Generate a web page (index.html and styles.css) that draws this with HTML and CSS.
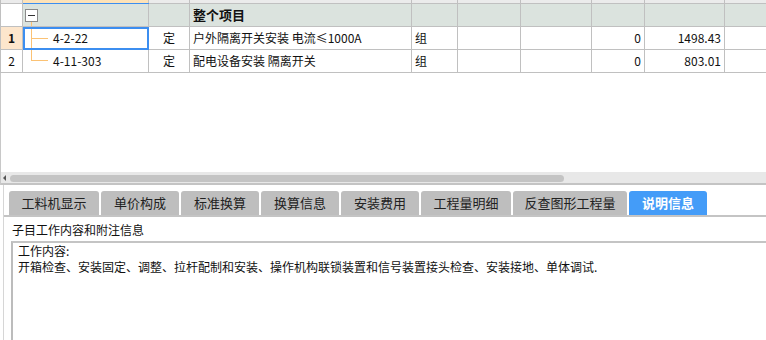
FILE: index.html
```html
<!DOCTYPE html>
<html lang="zh-CN">
<head>
    <meta charset="UTF-8">
    <title>说明信息</title>
    <link rel="stylesheet" href="styles.css">
</head>
<body>
    <div class="grid-panel">
        <table class="grid">
            <colgroup>
                <col style="width:22px"><col style="width:126px"><col style="width:41px">
                <col style="width:222px"><col style="width:46px"><col style="width:63px">
                <col style="width:71px"><col style="width:53px"><col style="width:80px"><col>
            </colgroup>
            <tr class="head">
                <td></td><td class="sel-col"></td><td></td><td></td><td></td>
                <td class="cut">是否</td><td></td><td></td><td></td><td></td>
            </tr>
            <tr class="group">
                <td class="num blank"></td>
                <td class="root"><span class="toggle"></span></td>
                <td></td>
                <td class="bold">整个项目</td>
                <td></td><td></td><td></td><td></td><td></td><td></td>
            </tr>
            <tr>
                <td class="num cur">1</td>
                <td class="code mid-branch active">4-2-22</td>
                <td class="mid">定</td>
                <td>户外隔离开关安装 电流≤1000A</td>
                <td>组</td>
                <td></td><td></td>
                <td class="right">0</td>
                <td class="right">1498.43</td>
                <td></td>
            </tr>
            <tr>
                <td class="num">2</td>
                <td class="code last-branch">4-11-303</td>
                <td class="mid">定</td>
                <td>配电设备安装 隔离开关</td>
                <td>组</td>
                <td></td><td></td>
                <td class="right">0</td>
                <td class="right">803.01</td>
                <td></td>
            </tr>
        </table>
        <div class="hscroll">
            <span class="arrow"></span>
            <span class="thumb"></span>
        </div>
    </div>

    <div class="detail">
        <div class="tabs">
            <div class="tab w90">工料机显示</div>
            <div class="tab">单价构成</div>
            <div class="tab">标准换算</div>
            <div class="tab">换算信息</div>
            <div class="tab">安装费用</div>
            <div class="tab w90">工程量明细</div>
            <div class="tab w114">反查图形工程量</div>
            <div class="tab on">说明信息</div>
        </div>
        <div class="caption">子目工作内容和附注信息</div>
        <div class="memo">
            <div>工作内容:</div>
            <div>开箱检查、安装固定、调整、拉杆配制和安装、操作机构联锁装置和信号装置接头检查、安装接地、单体调试.</div>
        </div>
    </div>
</body>
</html>
```

FILE: styles.css
```css
:root {
    --tree: #fbc274;
    --line: #c0c0c0;
}
body {
    margin: 0;
    width: 766px;
    height: 340px;
    overflow: hidden;
    background: white;
    font-family: "Noto Sans CJK SC", "Noto Sans", sans-serif;
    font-size: 12px;
    color: #111;
}
.grid-panel {
    position: relative;
    height: 185px;
    border-left: 1px solid #c8c8c8;
    box-sizing: border-box;
}
.grid {
    border-collapse: collapse;
    table-layout: fixed;
    width: 790px;
    margin-left: -1px;
}
.grid td {
    border: 1px solid var(--line);
    height: 22px;
    padding: 0 3px;
    line-height: 22px;
    white-space: nowrap;
    overflow: hidden;
}
.grid tr.head td {
    height: 3px;
    line-height: 3px;
    border-top: none;
    background: #ebebeb;
    font-size: 1px;
    padding: 0;
}
.grid tr.head td.sel-col {
    background: #fde2b8;
    border-bottom: 1px solid #3c8ef0;
}
.grid tr.head td.cut { color: transparent; }
.grid tr.group td { background: #dbe3de; }
.grid tr.group td.blank { background: white; }
.grid td.num { text-align: center; padding: 0; }
.grid td.cur { background: #fde6cc; font-weight: bold; }
.grid td.code { padding-left: 30px; }
.grid td.active { outline: 2px solid #3c8ef0; outline-offset: -2px; }
.grid td.mid { text-align: center; }
.grid td.right { text-align: right; }
.bold { font-weight: bold; font-size: 13px; }

/* tree connectors */
.grid tr.group td.root {
    background: linear-gradient(var(--tree), var(--tree)) 8px 17px / 1px 6px no-repeat, #dbe3de;
}
.grid td.mid-branch {
    background:
        linear-gradient(var(--tree), var(--tree)) 8px 0 / 1px 100% no-repeat,
        linear-gradient(var(--tree), var(--tree)) 8px 11px / 17px 1px no-repeat;
}
.grid td.last-branch {
    background:
        linear-gradient(var(--tree), var(--tree)) 8px 0 / 1px 11px no-repeat,
        linear-gradient(var(--tree), var(--tree)) 8px 10px / 17px 1px no-repeat;
}
.toggle {
    position: relative;
    display: inline-block;
    width: 11px;
    height: 11px;
    border: 1px solid #8a8a8a;
    background: white;
    vertical-align: middle;
    margin: -2px 0 0 -1px;
}
.toggle::after {
    content: "";
    position: absolute;
    left: 2px;
    right: 2px;
    top: 5px;
    height: 1px;
    background: #333;
}
.hscroll {
    position: absolute;
    left: 0;
    right: 0;
    top: 172px;
    height: 11px;
    background: #e8e8e8;
    border-bottom: 2px solid #c4c4c4;
}
.arrow {
    position: absolute;
    left: 2px;
    top: 3px;
    border-right: 3px solid #555;
    border-top: 3px solid transparent;
    border-bottom: 3px solid transparent;
}
.thumb {
    position: absolute;
    left: 9px;
    top: 3px;
    width: 554px;
    height: 7px;
    border-radius: 4px;
    background: #c4c4c4;
}
.detail {
    border-left: 1px solid #d6d6d6;
    margin-left: 3px;
    height: 155px;
}
.tabs {
    display: flex;
    gap: 2px;
    padding: 6px 0 0 5px;
    border-bottom: 2px solid #c4c4c4;
}
.tab {
    width: 78px;
    height: 24px;
    line-height: 24px;
    text-align: center;
    background: #bebebe;
    border-radius: 3px 3px 0 0;
    font-size: 13px;
    color: #222;
}
.tab.w90 { width: 90px; }
.tab.w114 { width: 114px; }
.tab.on { background: #449cf8; color: white; font-weight: bold; }
.caption {
    padding: 4px 0 0 8px;
    height: 20px;
    line-height: 18px;
    font-size: 12px;
}
.memo {
    margin-left: 7px;
    border-top: 2px solid #c4c4c4;
    border-left: 2px solid #bcbcbc;
    height: 110px;
    padding: 0 0 0 5px;
    line-height: 16px;
}
```
